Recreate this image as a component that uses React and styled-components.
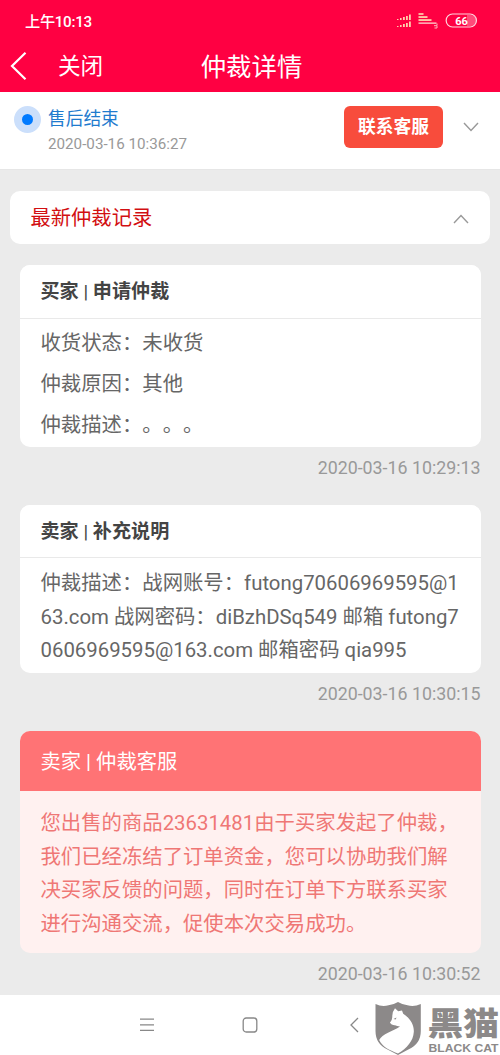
import React from 'react';
import styled, {createGlobalStyle} from 'styled-components';

const GlobalStyle = createGlobalStyle`
  body {
    margin: 0;
    background-color: #ebebeb;
    font-family: Roboto, "Noto Sans CJK SC", sans-serif;
    text-spacing-trim: space-all;
  }
`

const Page = styled.div`
  display: flex;
  flex-direction: column;
  width: 500px;
  height: 1055px;
  overflow: hidden;
  background-color: #ebebeb;
`

const Header = styled.header`
  height: 92px;
  flex: none;
  background-color: #ff0042;
  color: white;
`

const StatusBar = styled.div`
  display: flex;
  align-items: center;
  justify-content: space-between;
  height: 40px;
  padding: 0 22px 0 25px;
  font-size: 15.2px;
  font-weight: 500;
`

const Clock = styled.span`
  letter-spacing: -0.3px;
`

const StatusIcons = styled.svg`
  width: 82px;
  height: 20px;
`

const TitleBar = styled.div`
  display: grid;
  grid-template-columns: 1fr auto 1fr;
  align-items: center;
  height: 51px;
  padding: 0 7px 0 10px;
`

const Back = styled.div`
  display: flex;
  align-items: center;
  gap: 31px;
  font-size: 22.6px;
  line-height: 50px;
`

const BackLabel = styled.span`
  padding-top: 2px;
`

const Title = styled.h1`
  margin: 0;
  padding-top: 2px;
  font-size: 25.4px;
  font-weight: 400;
  line-height: 50px;
`

const Progress = styled.section`
  display: flex;
  align-items: flex-start;
  flex: none;
  box-sizing: border-box;
  height: 78px;
  padding: 14px 21px 0 14px;
  background-color: white;
  border-bottom: 1px solid #e6e6e6;
`

const Dot = styled.span`
  box-sizing: border-box;
  width: 27px;
  height: 27px;
  margin-right: 7px;
  border: 8px solid #cbdffb;
  border-radius: 50%;
  background-color: #007aff;
`

const ProgressText = styled.div`
  flex: 1;
  padding-top: 1px;
`

const ProgressName = styled.div`
  color: #1f7bce;
  font-size: 17.7px;
  line-height: 25px;
`

const ProgressDate = styled.div`
  color: #999;
  font-size: 15.2px;
  line-height: 24px;
`

const ContactButton = styled.button`
  width: 99px;
  height: 42px;
  margin-right: 20px;
  padding: 0;
  border: none;
  border-radius: 6px;
  background-color: #f84c3c;
  color: white;
  font-family: inherit;
  font-size: 17.8px;
  font-weight: 700;
  line-height: 42px;
`

const Chevron = styled.svg`
  width: 16px;
  height: 10px;
  margin-top: ${props => props.$top || 0}px;
  fill: none;
  stroke: #999;
  stroke-width: 1.4;
`

const RecordTitle = styled.section`
  display: flex;
  align-items: center;
  justify-content: space-between;
  flex: none;
  box-sizing: border-box;
  height: 53px;
  margin: 21px 10px;
  padding: 0 21px 0 20.5px;
  border-radius: 10px;
  background-color: white;
  color: #d20f12;
  font-size: 20.3px;
  line-height: 50px;
`

const Record = styled.article`
  flex: none;
  margin: 0 19.5px 0 20px;
`

const Card = styled.div`
  overflow: hidden;
  border-radius: 10px;
  background-color: ${props => props.$alert ? '#fff1f0' : 'white'};
`

const CardHead = styled.h2`
  box-sizing: border-box;
  height: ${props => props.$alert ? 60.5 : 53.6}px;
  margin: 0;
  padding-left: 20.5px;
  border-bottom: ${props => props.$alert ? 'none' : '1px solid #e9e9e9'};
  background-color: ${props => props.$alert ? '#ff7375' : 'white'};
  color: ${props => props.$alert ? 'white' : '#444'};
  font-size: ${props => props.$alert ? 20.3 : 19.1}px;
  font-weight: ${props => props.$alert ? 400 : 700};
  line-height: ${props => props.$alert ? 62 : 54}px;
`

const Separator = styled.span`
  font-weight: 400;
`

const CardBody = styled.div`
  display: flex;
  flex-direction: column;
  gap: 7px;
  padding: ${props => props.$alert ? '15.6px 20px 11.8px' : '8.5px 20px 4.9px'};
  padding-left: 20.5px;
  color: ${props => props.$alert ? '#ef7775' : '#666'};
  font-size: 20.37px;
  line-height: 33.7px;
`

const Line = styled.div`
  white-space: pre;
`

const Time = styled.div`
  height: ${props => props.$last ? 41.5 : 57.8}px;
  color: #999;
  font-size: 17.8px;
  line-height: 41px;
  text-align: right;
`

const NavBar = styled.footer`
  position: relative;
  display: flex;
  flex: 1;
  align-items: center;
  box-sizing: border-box;
  padding-left: 139px;
  gap: 87px;
  background-color: white;
`

const NavIcon = styled.svg`
  width: 16px;
  height: 16px;
  fill: none;
  stroke: #888;
  stroke-width: 1.3;
`

const Watermark = styled.svg`
  position: absolute;
  top: 5px;
  right: 0;
  width: 126px;
  height: 55px;
  overflow: visible;
`

const records = [
  {
    role: '买家',
    action: '申请仲裁',
    paragraphs: [['收货状态：未收货'], ['仲裁原因：其他'], ['仲裁描述：。。。']],
    time: '2020-03-16 10:29:13'
  },
  {
    role: '卖家',
    action: '补充说明',
    paragraphs: [[
      '仲裁描述：战网账号：futong70606969595@1',
      '63.com 战网密码：diBzhDSq549 邮箱 futong7',
      '0606969595@163.com 邮箱密码 qia995'
    ]],
    time: '2020-03-16 10:30:15'
  },
  {
    role: '卖家',
    action: '仲裁客服',
    alert: true,
    paragraphs: [[
      '您出售的商品23631481由于买家发起了仲裁，',
      '我们已经冻结了订单资金，您可以协助我们解',
      '决买家反馈的问题，同时在订单下方联系买家',
      '进行沟通交流，促使本次交易成功。'
    ]],
    time: '2020-03-16 10:30:52'
  }
];

function SignalIcons() {
  return (
    <StatusIcons viewBox="0 0 82 20">
      {[10, 17].map(y =>
        <g key={y} fill="#ffd0ac">
          <rect x="1" y={y - 1} width="1.5" height="1"/>
          <rect x="4" y={y - 2} width="1.6" height="2"/>
          <rect x="7" y={y - 3} width="1.8" height="3"/>
          <rect x="10" y={y - 4} width="1.8" height="4"/>
          <rect x="13" y={y - 5.5} width="1.8" height="5.5"/>
        </g>
      )}
      <g fill="#ffdbb0">
        <rect x="22.5" y="3.2" width="5" height="1.6"/>
        <rect x="22.5" y="6.2" width="9" height="1.7"/>
        <rect x="22.5" y="9.2" width="13" height="1.7"/>
        <rect x="22.5" y="12.4" width="18" height="1.5" fill="#ffb8bc"/>
      </g>
      <path d="M38 15.7h3v-2.2M41 16v2h-2.5" fill="none" stroke="#ffb8bc" strokeWidth="1"/>
      <path d="M71 5h4a5.2 5.2 0 0 1 0 11h-4z" fill="#ff4a7a"/>
      <rect x="50.2" y="4" width="30.2" height="13" rx="6.3" fill="none" stroke="#ffd5de" strokeWidth="1.2"/>
      <text x="65.5" y="14.6" fill="white" fontSize="11" fontWeight="700" textAnchor="middle">66</text>
    </StatusIcons>
  );
}

function BlackCat() {
  return (
    <Watermark viewBox="0 0 126 55" fill="#8c8989">
      <path d="M1.500 4q6.500 3.200 13 1.300Q20 4.500 24 2q4 2.500 9.500 3.300Q40 7.200 46.800 4v27q0 13-12.500 18.500L24 55 13.500 49.500Q1.500 44 1.500 31z"/>
      <path d="M21 8.300l3.200 2.900 3.800-.6 1.200 3.200C36 18 40.300 25 39.800 32 39.300 41 33 48 24 53.600 15 50 8 46.500 5.200 40 8 34 19 31 26 26.500q-3-.2-5-1.300-3.500.3-5.100-2.400 2.400-2.800 2.400-5.800-.3-5 2.700-8.700z" fill="white"/>
      <path d="M19.500 18.900l3-1.500-.8 2z"/>
      <text x="53.500" y="35" fontFamily="Noto Sans CJK SC" fontSize="32" fontWeight="900" textLength="71.500" lengthAdjust="spacingAndGlyphs">黑猫</text>
      <text x="54.500" y="51.800" fontFamily="Liberation Sans" fontSize="10.500" fontWeight="700" textLength="70" lengthAdjust="spacingAndGlyphs">BLACK CAT</text>
    </Watermark>
  );
}

function RecordCard({record}) {
  const {role, action, alert, paragraphs, time} = record;
  return (
    <Record>
      <Card $alert={alert}>
        <CardHead $alert={alert}>{role} <Separator>|</Separator> {action}</CardHead>
        <CardBody $alert={alert}>
          {paragraphs.map(lines =>
            <div key={lines[0]}>
              {lines.map(line => <Line key={line}>{line}</Line>)}
            </div>
          )}
        </CardBody>
      </Card>
      <Time $last={alert}>{time}</Time>
    </Record>
  );
}

function App() {
  return (
    <Page>
      <GlobalStyle/>
      <Header>
        <StatusBar>
          <Clock>上午10:13</Clock>
          <SignalIcons/>
        </StatusBar>
        <TitleBar>
          <Back>
            <svg width="17" height="28" viewBox="0 0 17 28" fill="none" stroke="white" strokeWidth="2.2">
              <path d="M15.500 .8L2 14l13.500 13.200"/>
            </svg>
            <BackLabel>关闭</BackLabel>
          </Back>
          <Title>仲裁详情</Title>
        </TitleBar>
      </Header>
      <Progress>
        <Dot/>
        <ProgressText>
          <ProgressName>售后结束</ProgressName>
          <ProgressDate>2020-03-16 10:36:27</ProgressDate>
        </ProgressText>
        <ContactButton>联系客服</ContactButton>
        <Chevron $top={16} viewBox="0 0 16 10"><path d="M1 1l7 7.500L15 1"/></Chevron>
      </Progress>
      <RecordTitle>
        <span>最新仲裁记录</span>
        <Chevron $top={3} viewBox="0 0 16 10"><path d="M1 9l7-7.500L15 9"/></Chevron>
      </RecordTitle>
      {records.map(record => <RecordCard key={record.time} record={record}/>)}
      <NavBar>
        <NavIcon viewBox="0 0 16 16"><path d="M1 2.200h14M1 7.800h14M1 13.400h14"/></NavIcon>
        <NavIcon viewBox="0 0 16 16"><rect x="1.200" y="1" width="13.600" height="14" rx="3"/></NavIcon>
        <NavIcon viewBox="0 0 16 16"><path d="M13 1L6 8l7 7"/></NavIcon>
        <BlackCat/>
      </NavBar>
    </Page>
  );
}

export default App;
